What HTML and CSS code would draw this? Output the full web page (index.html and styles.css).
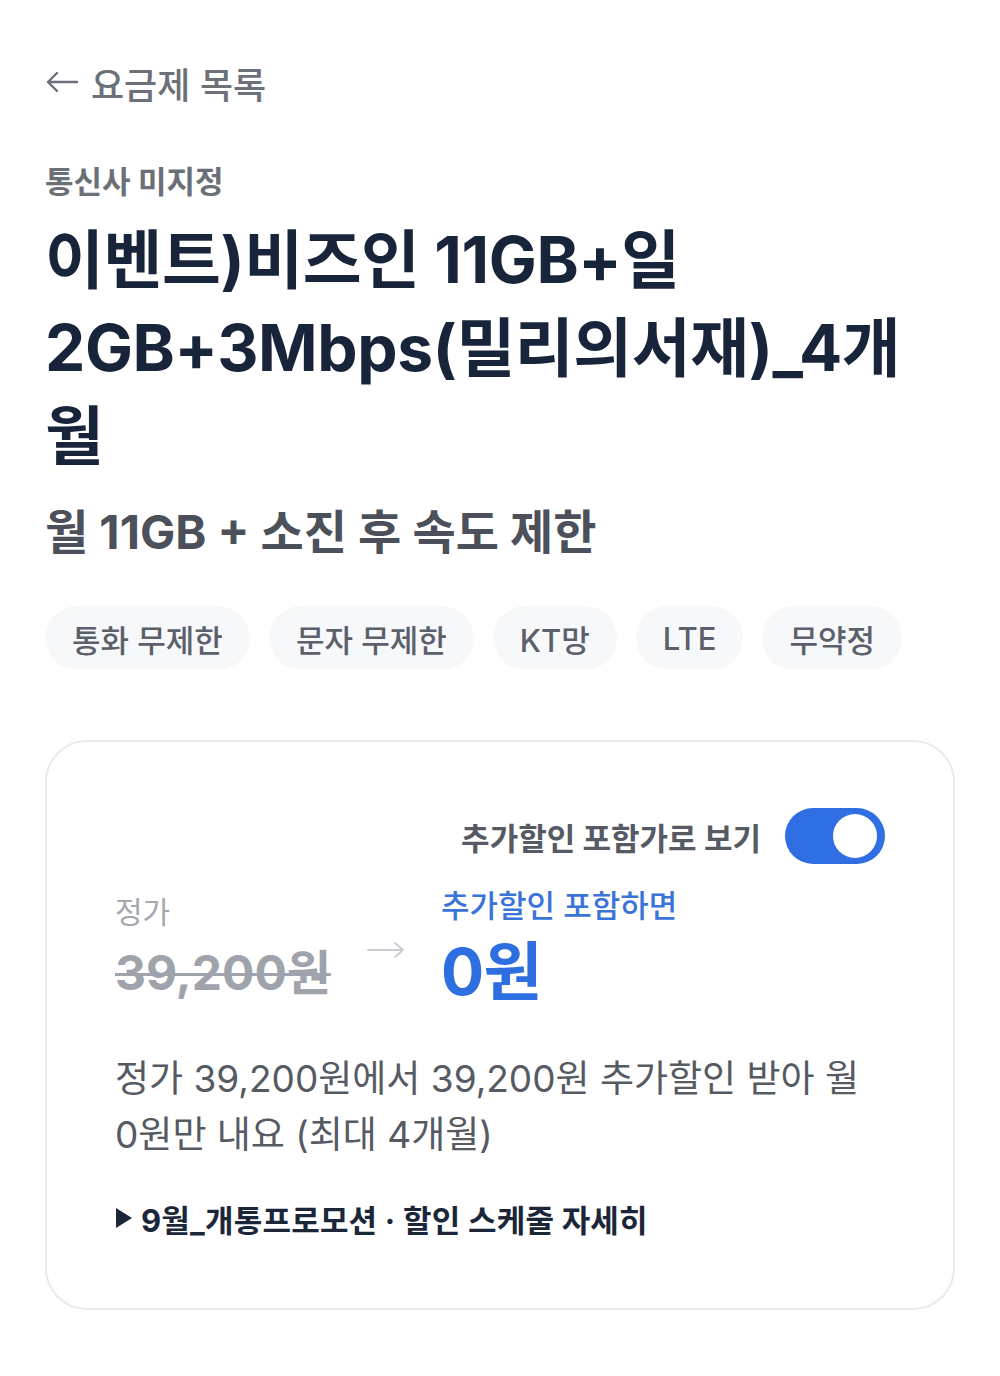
FILE: index.html
```html
<!DOCTYPE html>
<html lang="ko">
<head>
<meta charset="utf-8">
<title>요금제 상세</title>
<link rel="stylesheet" href="styles.css">
</head>
<body>
<div class="page">
  <a class="back" href="#">
    <svg class="back-icon" width="34" height="24" viewBox="0 0 34 24" aria-hidden="true"><path d="M32 12H3M12 3L3 12L12 21" fill="none" stroke="#6b7079" stroke-width="2.4" stroke-linecap="round" stroke-linejoin="round"/></svg>
    <span>요금제 목록</span>
  </a>
  <div class="carrier">통신사 미지정</div>
  <h1 class="title">이벤트)비즈인 11GB+일<br>2GB+3Mbps(밀리의서재)_4개<br>월</h1>
  <div class="subtitle">월 11GB + 소진 후 속도 제한</div>
  <div class="chips">
    <span class="chip">통화 무제한</span>
    <span class="chip">문자 무제한</span>
    <span class="chip">KT망</span>
    <span class="chip">LTE</span>
    <span class="chip">무약정</span>
  </div>
  <div class="card">
    <div class="toggle-row">
      <span class="toggle-label">추가할인 포함가로 보기</span>
      <span class="toggle"><span class="knob"></span></span>
    </div>
    <div class="price-row">
      <div class="price-col regular">
        <div class="price-label">정가</div>
        <div class="price-old">39,200원</div>
      </div>
      <svg class="price-arrow" width="40" height="20" viewBox="0 0 40 20" aria-hidden="true"><path d="M2 10H37M29 3L37 10L29 17" fill="none" stroke="#c9ccd1" stroke-width="1.8" stroke-linecap="round" stroke-linejoin="round"/></svg>
      <div class="price-col discounted">
        <div class="price-label blue">추가할인 포함하면</div>
        <div class="price-new">0원</div>
      </div>
    </div>
    <p class="desc">정가 39,200원에서 39,200원 추가할인 받아 월 0원만 내요 (최대 4개월)</p>
    <a class="promo" href="#"><svg class="promo-tri" width="18" height="22" viewBox="0 0 18 22" aria-hidden="true"><path d="M1 1L17 11L1 21Z" fill="#1c2639"/></svg>9월_개통프로모션 · 할인 스케줄 자세히</a>
  </div>
</div>
</body>
</html>
```

FILE: styles.css
```css
* { box-sizing: border-box; }
html, body { margin: 0; padding: 0; background: #ffffff; }
body {
  font-family: Inter, "Noto Sans CJK KR", sans-serif;
  color: #1b2537;
}
.page {
  width: 1000px;
  padding: 59px 45px 40px;
}
.back {
  display: flex;
  align-items: center;
  gap: 12px;
  height: 48px;
  color: #6b7079;
  text-decoration: none;
  font-size: 36px;
  font-weight: 500;
}
.back-icon { margin-top: -2px; }
.carrier {
  margin-top: 55px;
  font-size: 31px;
  line-height: 40px;
  font-weight: 700;
  color: #6b6f78;
}
.title {
  margin: 14px 0 0;
  font-size: 64px;
  line-height: 88px;
  font-weight: 700;
  color: #18243a;
  letter-spacing: -0.4px;
  white-space: nowrap;
}
.subtitle {
  margin-top: 22px;
  font-size: 47px;
  line-height: 60px;
  font-weight: 700;
  color: #4b505a;
}
.chips {
  display: flex;
  gap: 19px;
  margin-top: 44px;
}
.chip {
  display: inline-flex;
  align-items: center;
  height: 64px;
  padding: 0 27px;
  border-radius: 32px;
  background: #f7f8fa;
  color: #5b606b;
  font-size: 31px;
  font-weight: 500;
}
.card {
  margin-top: 70px;
  border: 2px solid #e9eaec;
  border-radius: 42px;
  padding: 66px 68px 70px;
}
.toggle-row {
  display: flex;
  justify-content: flex-end;
  align-items: center;
  gap: 24px;
}
.toggle-label {
  font-size: 31px;
  font-weight: 700;
  color: #555a63;
}
.toggle {
  position: relative;
  display: inline-block;
  width: 100px;
  height: 56px;
  border-radius: 28px;
  background: #2f6fe3;
}
.knob {
  position: absolute;
  top: 6px;
  right: 8px;
  width: 44px;
  height: 44px;
  border-radius: 50%;
  background: #ffffff;
}
.price-row {
  display: flex;
  align-items: flex-start;
  margin-top: 22px;
}
.price-col.regular { padding-top: 6px; }
.price-label {
  font-size: 30px;
  line-height: 40px;
  color: #a4a8af;
  font-weight: 400;
}
.price-label.blue {
  font-size: 31px;
  color: #3b74d8;
  font-weight: 500;
}
.price-old {
  margin-top: 10px;
  font-size: 48px;
  line-height: 62px;
  font-weight: 700;
  color: #9fa3ab;
  text-decoration: line-through;
  text-decoration-thickness: 3px;
}
.price-arrow {
  margin: 54px 35px 0;
  flex: none;
}
.price-new {
  font-size: 64px;
  line-height: 92px;
  font-weight: 700;
  color: #2d6fe0;
  letter-spacing: -0.5px;
}
.desc {
  margin: 33px 0 0;
  font-size: 37px;
  line-height: 56px;
  color: #555a63;
  font-weight: 400;
}
.promo {
  display: flex;
  align-items: center;
  gap: 8px;
  margin-top: 35px;
  height: 40px;
  font-size: 31px;
  font-weight: 700;
  color: #1c2639;
  text-decoration: none;
  letter-spacing: 0.2px;
}
.promo-tri { flex: none; }
```
